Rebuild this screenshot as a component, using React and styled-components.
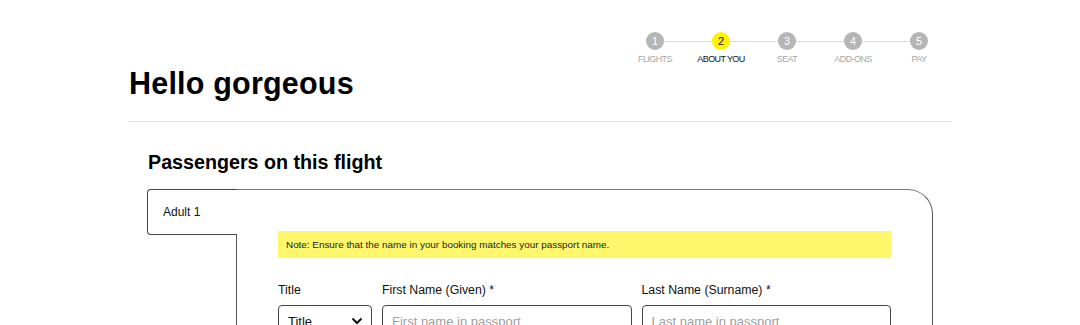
import React from "react";
import styled, { createGlobalStyle } from "styled-components";

const Global = createGlobalStyle`
  html, body { margin: 0; padding: 0; background: #fff; }
  body { font-family: "Liberation Sans", Arial, sans-serif; color: #111; }
  * { box-sizing: border-box; }
`;

const Page = styled.div`
  width: 824px;
  margin: 0 auto;
  padding-top: 32px;
`;

const Header = styled.header`
  display: flex;
  flex-direction: column;
`;

const Stepper = styled.ol`
  list-style: none;
  margin: 0;
  padding: 0;
  display: flex;
  align-self: flex-end;
`;

const Step = styled.li`
  position: relative;
  width: 66px;
  display: flex;
  flex-direction: column;
  align-items: center;
  gap: 4px;
  &:not(:last-child)::after {
    content: "";
    position: absolute;
    top: 9px;
    left: calc(50% + 9px);
    width: 48px;
    height: 1px;
    background: #d9d9d9;
  }
`;

const Dot = styled.span`
  width: 18px;
  height: 18px;
  border-radius: 50%;
  background: ${(p) => (p.$active ? "#fff200" : "#b5b5b5")};
  color: ${(p) => (p.$active ? "#111" : "#fff")};
  font-size: 11px;
  display: flex;
  align-items: center;
  justify-content: center;
`;

const StepLabel = styled.span`
  font-size: 9px;
  line-height: 10px;
  letter-spacing: -0.6px;
  text-transform: uppercase;
  color: ${(p) => (p.$active ? "#111" : "#a6a6a6")};
  white-space: nowrap;
`;

const Title = styled.h1`
  margin: 2px 0 0 1px;
  font-size: 30.5px;
  font-weight: 700;
  line-height: 34px;
  letter-spacing: 0.2px;
  color: #000;
`;

const Rule = styled.hr`
  margin: 21px 0 0;
  border: 0;
  height: 1px;
  background: #e3e3e3;
`;

const Section = styled.section`
  padding: 28px 0 0 19px;
`;

const SectionTitle = styled.h2`
  margin: 0 0 15px 1px;
  font-size: 19.7px;
  font-weight: 700;
  line-height: 24px;
  color: #000;
`;

const Tabs = styled.div`
  display: flex;
  align-items: flex-start;
  width: 786px;
`;

const Tab = styled.div`
  position: relative;
  z-index: 1;
  width: 90px;
  height: 46px;
  margin-right: -1px;
  background: #fff;
  border: 1px solid #444;
  border-right: 0;
  border-radius: 4px 0 0 4px;
  display: flex;
  align-items: center;
  padding-left: 15px;
  font-size: 12px;
  color: #111;
`;

const Panel = styled.div`
  flex: 1;
  border: 1px solid #555;
  border-top-color: #777;
  border-bottom: 0;
  border-radius: 0 25px 0 0;
  padding: 41px 41px 40px 41px;
  min-height: 200px;
`;

const Note = styled.div`
  background: #fff76b;
  height: 27px;
  display: flex;
  align-items: center;
  padding-left: 8px;
  font-size: 9.9px;
  color: #222;
`;

const FormRow = styled.div`
  display: grid;
  grid-template-columns: 94px 1fr 1fr;
  column-gap: 10px;
  margin-top: 25px;
`;

const Field = styled.label`
  display: flex;
  flex-direction: column;
  gap: 7px;
`;

const FieldLabel = styled.span`
  font-size: 12.3px;
  line-height: 15px;
  color: #111;
`;

const Input = styled.input`
  height: 32px;
  border: 1px solid #444;
  border-radius: 4px;
  padding: 0 9px;
  font: inherit;
  font-size: 13px;
  color: #111;
  &::placeholder { color: #a0a0a0; }
`;

const SelectBox = styled.div`
  height: 32px;
  border: 1px solid #444;
  border-radius: 4px;
  padding: 0 8px 0 9px;
  display: flex;
  align-items: center;
  justify-content: space-between;
  font-size: 13px;
  color: #111;
`;

const steps = ["Flights", "About you", "Seat", "Add-ons", "Pay"];

export default function App() {
  return (
    <>
      <Global />
      <Page>
        <Header>
          <Stepper>
            {steps.map((s, i) => (
              <Step key={s}>
                <Dot $active={i === 1}>{i + 1}</Dot>
                <StepLabel $active={i === 1}>{s}</StepLabel>
              </Step>
            ))}
          </Stepper>
          <Title>Hello gorgeous</Title>
        </Header>
        <Rule />
        <Section>
          <SectionTitle>Passengers on this flight</SectionTitle>
          <Tabs>
            <Tab>Adult 1</Tab>
            <Panel>
              <Note>Note: Ensure that the name in your booking matches your passport name.</Note>
              <FormRow>
                <Field>
                  <FieldLabel>Title</FieldLabel>
                  <SelectBox>
                    <span>Title</span>
                    <svg width="12" height="8" viewBox="0 0 12 8">
                      <path d="M1.5 1.5 L6 6 L10.5 1.5" fill="none" stroke="#111" strokeWidth="2" />
                    </svg>
                  </SelectBox>
                </Field>
                <Field>
                  <FieldLabel>First Name (Given) *</FieldLabel>
                  <Input placeholder="First name in passport" />
                </Field>
                <Field>
                  <FieldLabel>Last Name (Surname) *</FieldLabel>
                  <Input placeholder="Last name in passport" />
                </Field>
              </FormRow>
            </Panel>
          </Tabs>
        </Section>
      </Page>
    </>
  );
}
